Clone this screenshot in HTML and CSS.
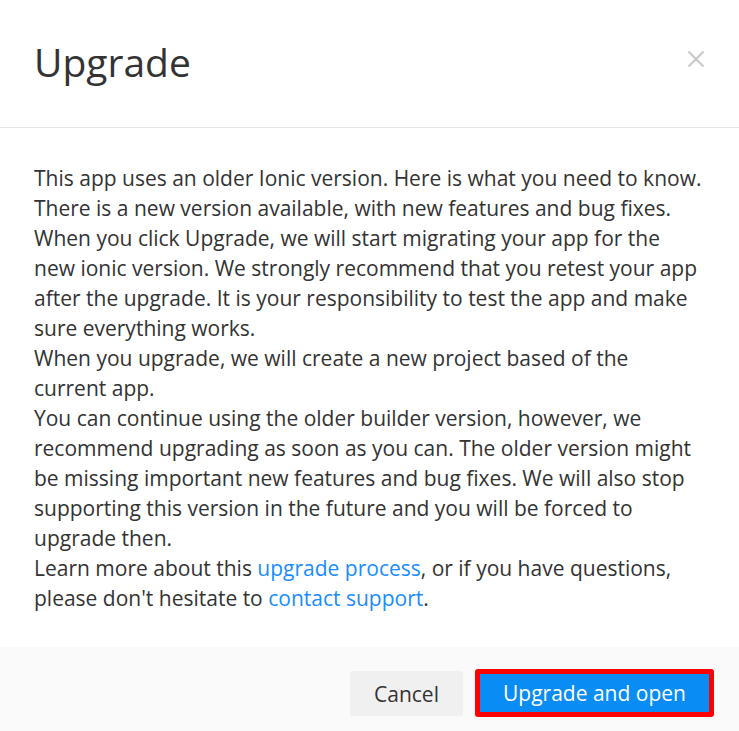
FILE: index.html
```html
<!DOCTYPE html>
<html>
<head>
<meta charset="utf-8">
<link rel="stylesheet" href="styles.css">
</head>
<body>
<div class="dialog">
  <div class="header">
    <h1 class="title">Upgrade</h1>
    <button class="close" aria-label="Close">
      <svg width="18" height="18" viewBox="0 0 18 18"><path d="M1.5 1.5L16.5 16.5M16.5 1.5L1.5 16.5" stroke="#cbcbcb" stroke-width="2.4" fill="none"/></svg>
    </button>
  </div>
  <div class="body">
    <p>This app uses an older Ionic version. Here is what you need to know.</p>
    <p>There is a new version available, with new features and bug fixes. When you click Upgrade, we will start migrating your app for the new ionic version. We strongly recommend that you retest your app after the upgrade. It is your responsibility to test the app and make sure everything works.</p>
    <p>When you upgrade, we will create a new project based of the current app.</p>
    <p>You can continue using the older builder version, however, we recommend upgrading as soon as you can. The older version might be missing important new features and bug fixes. We will also stop supporting this version in the future and you will be forced to upgrade then.</p>
    <p>Learn more about this <a href="#" class="link">upgrade process</a>, or if you have questions, please don't hesitate to <a href="#" class="link">contact support</a>.</p>
  </div>
  <div class="footer">
    <button class="btn btn-cancel">Cancel</button>
    <button class="btn btn-primary">Upgrade and open</button>
  </div>
</div>
</body>
</html>
```
FILE: styles.css
```css
html, body {
  margin: 0;
  padding: 0;
  background: #fff;
}
body {
  font-family: "Open Sans", "DejaVu Sans", sans-serif;
  color: #333;
}
.dialog {
  width: 739px;
  height: 731px;
  display: flex;
  flex-direction: column;
  background: #fff;
}
.header {
  height: 128px;
  box-sizing: border-box;
  border-bottom: 1px solid #e5e5e5;
  display: flex;
  align-items: flex-start;
  justify-content: space-between;
  padding: 0 34px 0 34px;
}
.title {
  margin: 35px 0 0 0;
  font-size: 39px;
  font-weight: 400;
  line-height: 54px;
  color: #333;
}
.close {
  margin-top: 50px;
  margin-right: 0;
  background: none;
  border: 0;
  padding: 0;
  width: 18px;
  height: 18px;
  cursor: pointer;
}
.close svg { display: block; }
.body {
  flex: 1;
  padding: 35px 34px 0 34px;
  font-size: 21px;
  line-height: 30px;
}
.body p {
  margin: 0;
}
.link {
  color: #1a8cff;
  text-decoration: none;
}
.footer {
  height: 84px;
  background: #fafafa;
  display: flex;
  justify-content: flex-end;
  align-items: flex-start;
  padding: 22px 25px 0 0;
  gap: 12px;
  box-sizing: border-box;
}
.btn {
  font-family: "Open Sans", "DejaVu Sans", sans-serif;
  font-size: 21px;
  border-radius: 3px;
  cursor: pointer;
  line-height: 28px;
  padding: 0;
}
.btn-cancel {
  margin-top: 2px;
  width: 113px;
  height: 45px;
  background: #f0f0f0;
  border: 0;
  color: #333;
}
.btn-primary {
  width: 239px;
  height: 48px;
  background: #0a8cf5;
  color: #fff;
  border: 5px solid #ff0000;
  box-sizing: border-box;
}
```
